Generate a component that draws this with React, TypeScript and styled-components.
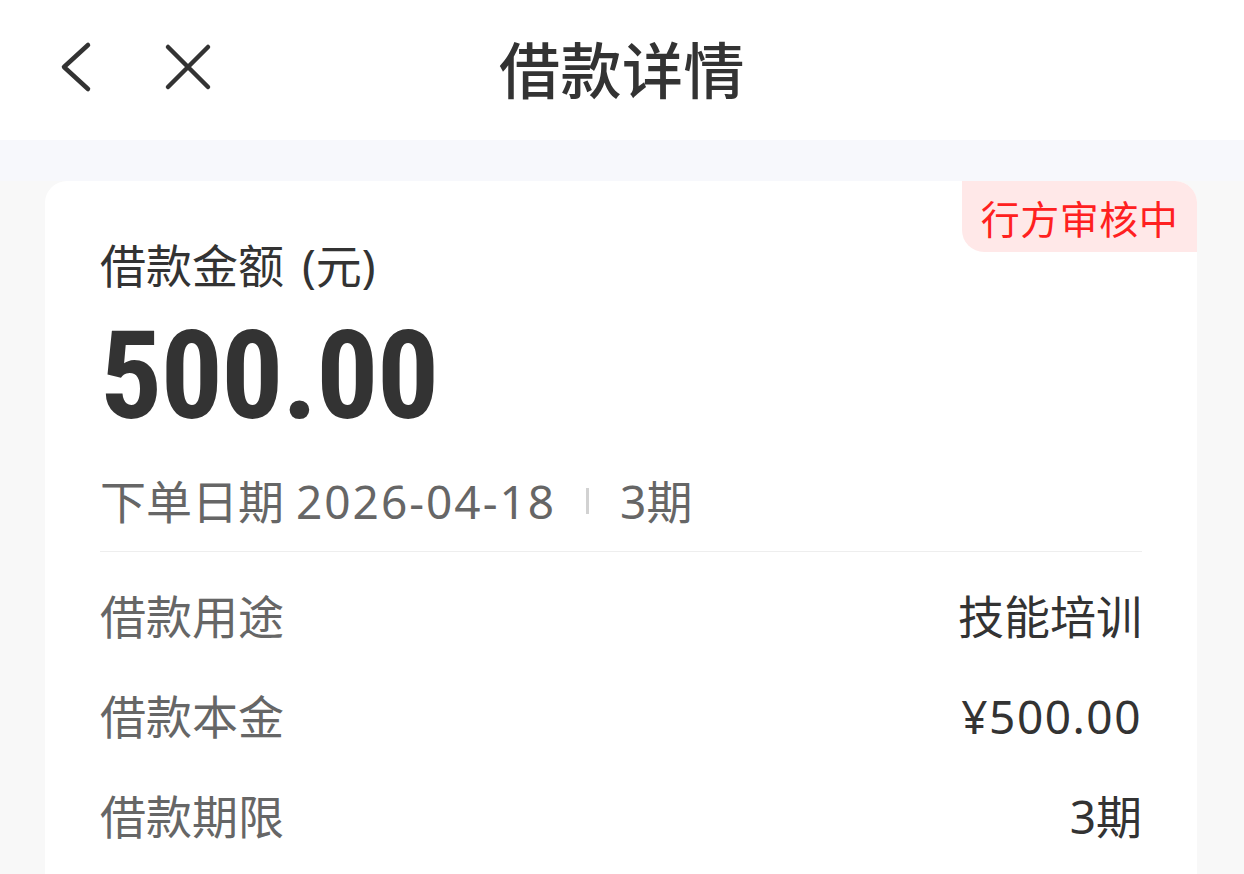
import styled, { createGlobalStyle } from "styled-components";

const GlobalStyle = createGlobalStyle`
  body {
    margin: 0;
    background-color: #f8f8f8;
    font-family: "Noto Sans", "Noto Sans CJK SC", sans-serif;
    color: #333;
  }
`;

const Page = styled.div`
  min-height: 874px;
  background-color: #f8f8f8;
`;

const NavBar = styled.header`
  height: 140px;
  box-sizing: border-box;
  padding-bottom: 6px;
  background-color: #fff;
  display: grid;
  grid-template-columns: 1fr auto 1fr;
  align-items: center;
`;

const NavLeft = styled.div`
  display: flex;
  align-items: center;
  gap: 69px;
  padding-left: 58px;
`;

const IconButton = styled.button`
  border: none;
  background: none;
  padding: 0;
  display: flex;
  color: #333;
`;

const Title = styled.h1`
  margin: 0;
  font-size: 61px;
  font-weight: 500;
  color: #333;
  letter-spacing: 0.5px;
`;

const Band = styled.div`
  height: 41px;
  background-color: #f7f8fc;
`;

const Main = styled.main`
  padding: 0 47px 0 45px;
`;

const Card = styled.section`
  position: relative;
  background-color: #fff;
  border-radius: 22px 22px 0 0;
  padding: 52px 55px 40px;
  min-height: 700px;
  box-sizing: border-box;
`;

const Badge = styled.div`
  position: absolute;
  top: 0;
  right: 0;
  width: 235px;
  height: 71px;
  display: flex;
  align-items: center;
  justify-content: center;
  background-color: #ffe8e8;
  color: #ff2020;
  font-size: 39px;
  border-radius: 0 22px 0 22px;
  letter-spacing: 0.5px;
`;

const AmountLabel = styled.div`
  font-size: 46px;
  line-height: 64px;
  color: #333;
  word-spacing: 6px;
`;

const Amount = styled.div`
  margin-top: 18px;
  font-family: "Liberation Sans Narrow", "Roboto Condensed", "DejaVu Sans Condensed", "Liberation Sans", sans-serif;
  font-weight: 700;
  font-size: 123px;
  line-height: 1;
  letter-spacing: -1.5px;
  color: #333;
`;

const DateLine = styled.div`
  margin-top: 31px;
  display: flex;
  align-items: center;
  font-size: 46px;
  line-height: 64px;
  color: #666;
`;

const Digits = styled.span<{ $spacing: number }>`
  letter-spacing: ${(p) => p.$spacing}px;
`;

const Divider = styled.span`
  width: 3px;
  height: 26px;
  background-color: #d2d2d2;
  margin: 0 31px 0 30px;
`;

const Separator = styled.hr`
  margin: 18px 0 0;
  border: none;
  height: 1px;
  background-color: #eee;
`;

const InfoList = styled.div`
  display: flex;
  flex-direction: column;
  gap: 36px;
  padding-top: 32px;
`;

const InfoRow = styled.div`
  display: flex;
  justify-content: space-between;
  align-items: center;
  font-size: 46px;
  line-height: 64px;
`;

const InfoLabel = styled.span`
  color: #666;
`;

const InfoValue = styled.span`
  color: #333;
`;

const rows = [
  { label: "借款用途", value: "技能培训", spacing: 0 },
  { label: "借款本金", value: "¥500.00", spacing: 1.5 },
  { label: "借款期限", value: "3期", spacing: 0 },
];

function App() {
  return (
    <Page>
      <GlobalStyle />
      <NavBar>
        <NavLeft>
          <IconButton aria-label="返回">
            <svg width="36" height="56" viewBox="0 0 36 56" fill="none">
              <path
                d="M30 6 L6 28 L30 50"
                stroke="currentColor"
                strokeWidth="4.5"
                strokeLinecap="round"
                strokeLinejoin="round"
              />
            </svg>
          </IconButton>
          <IconButton aria-label="关闭">
            <svg width="50" height="50" viewBox="0 0 50 50" fill="none">
              <path
                d="M5 5 L45 45 M45 5 L5 45"
                stroke="currentColor"
                strokeWidth="4.5"
                strokeLinecap="round"
              />
            </svg>
          </IconButton>
        </NavLeft>
        <Title>借款详情</Title>
        <div />
      </NavBar>
      <Band />
      <Main>
        <Card>
          <Badge>行方审核中</Badge>
          <AmountLabel>借款金额 (元)</AmountLabel>
          <Amount>500.00</Amount>
          <DateLine>
            下单日期&nbsp;<Digits $spacing={2}>2026-04-18</Digits>
            <Divider />
            3期
          </DateLine>
          <Separator />
          <InfoList>
            {rows.map((r) => (
              <InfoRow key={r.label}>
                <InfoLabel>{r.label}</InfoLabel>
                <InfoValue>
                  <Digits $spacing={r.spacing}>{r.value}</Digits>
                </InfoValue>
              </InfoRow>
            ))}
          </InfoList>
        </Card>
      </Main>
    </Page>
  );
}

export default App;
